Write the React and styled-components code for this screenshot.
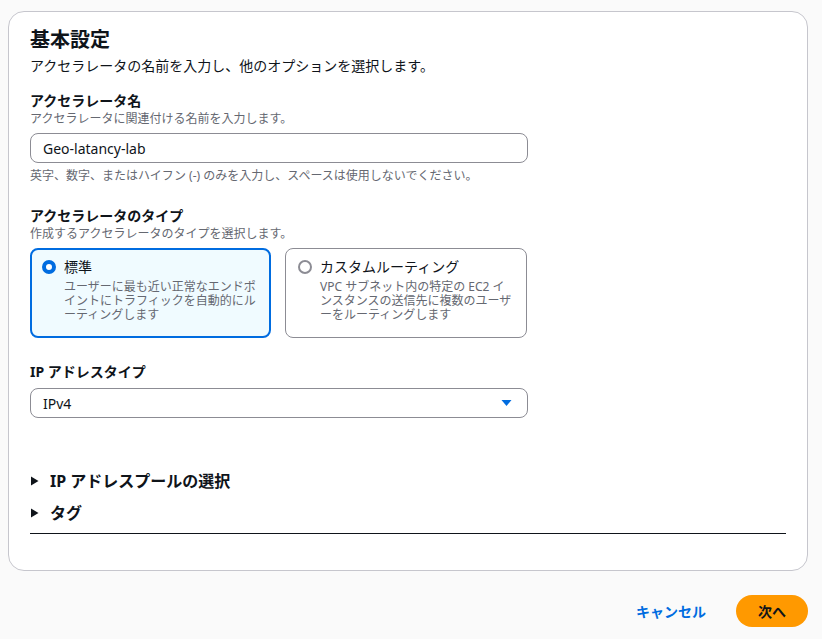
import React from "react";
import styled, { createGlobalStyle } from "styled-components";

const Global = createGlobalStyle`
  html, body { margin: 0; padding: 0; background: #fafafa; }
  body { font-family: "Noto Sans", "Noto Sans CJK JP", sans-serif; color: #0f141a; }
  * { box-sizing: border-box; }
`;

const Page = styled.div`
  padding: 11px 14px 0 8px;
  width: 822px;
`;

const Card = styled.section`
  width: 800px;
  background: #fff;
  border: 1px solid #c6c6cd;
  border-radius: 16px;
  padding: 16px 21px 36px 21px;
  display: flex;
  flex-direction: column;
`;

const Title = styled.h2`
  margin: 0;
  font-size: 20px;
  line-height: 24px;
  font-weight: 700;
`;

const Lead = styled.p`
  margin: 4px 0 0;
  font-size: 14px;
  line-height: 20px;
  color: #0f141a;
`;

const Field = styled.div`
  display: flex;
  flex-direction: column;
  width: 498px;
  margin-top: ${(p) => p.$top}px;
`;

const Label = styled.div`
  font-size: 14px;
  line-height: 20px;
  font-weight: 700;
`;

const Hint = styled.div`
  font-size: 12px;
  line-height: 16px;
  color: #656871;
  margin-top: ${(p) => p.$top || 0}px;
`;

const Input = styled.div`
  height: 30px;
  margin-top: 6px;
  border: 1px solid #8c8c94;
  border-radius: 8px;
  padding: 0 12px;
  display: flex;
  align-items: center;
  font-size: 14px;
  color: #0f141a;
`;

const Select = styled(Input)`
  justify-content: space-between;
  padding-right: 15px;
`;

const Tiles = styled.div`
  display: grid;
  grid-template-columns: 241px 242px;
  gap: 14px;
  margin-top: 6px;
`;

const Tile = styled.div`
  height: 90px;
  border-radius: 8px;
  border: ${(p) => (p.$on ? "2px solid #006ce0" : "1px solid #8c8c94")};
  background: ${(p) => (p.$on ? "#f0fbff" : "#fff")};
  padding: ${(p) => (p.$on ? "7px 11px 0 10px" : "8px 12px 0 12px")};
  display: flex;
  gap: 8px;
`;

const Radio = styled.span`
  flex: 0 0 14px;
  width: 14px;
  height: 14px;
  margin-top: 3px;
  border-radius: 50%;
  border: ${(p) => (p.$on ? "4px solid #006ce0" : "2px solid #8c8c94")};
  background: #fff;
`;

const TileBody = styled.div`
  display: flex;
  flex-direction: column;
  min-width: 0;
`;

const TileTitle = styled.div`
  font-size: 14px;
  line-height: 20px;
`;

const TileDesc = styled.div`
  font-size: 12px;
  line-height: 14px;
  color: #656871;
  margin-top: 3px;
  line-break: anywhere;
  word-break: break-all;
`;

const Expanders = styled.div`
  display: flex;
  flex-direction: column;
  gap: 10px;
  margin-top: 52px;
  padding-bottom: 9px;
  border-bottom: 1px solid #0f141a;
`;

const Expander = styled.div`
  display: flex;
  align-items: center;
  gap: 11px;
  font-size: 16px;
  line-height: 22px;
  font-weight: 700;
`;

const Footer = styled.div`
  display: flex;
  justify-content: flex-end;
  align-items: center;
  gap: 30px;
  margin-top: 24px;
`;

const LinkButton = styled.button`
  border: 0;
  background: none;
  font-family: inherit;
  font-size: 14px;
  font-weight: 700;
  color: #006ce0;
  padding: 0;
`;

const Primary = styled.button`
  border: 0;
  font-family: inherit;
  font-size: 14px;
  font-weight: 700;
  color: #0f141a;
  background: #ff9900;
  border-radius: 16px;
  height: 32px;
  width: 72px;
`;

const Caret = () => (
  <svg width="11" height="8" viewBox="0 0 11 8">
    <path d="M0.5 1 L10.5 1 L5.5 7 Z" fill="#006ce0" />
  </svg>
);

const Arrow = () => (
  <svg width="9" height="10" viewBox="0 0 9 10">
    <path d="M1 0.5 L8.5 5 L1 9.5 Z" fill="#0f141a" />
  </svg>
);

export default function App() {
  return (
    <>
      <Global />
      <Page>
        <Card>
          <Title>基本設定</Title>
          <Lead>アクセラレータの名前を入力し、他のオプションを選択します。</Lead>

          <Field $top={15}>
            <Label>アクセラレータ名</Label>
            <Hint>アクセラレータに関連付ける名前を入力します。</Hint>
            <Input>Geo-latancy-lab</Input>
            <Hint $top={5}>英字、数字、またはハイフン (-) のみを入力し、スペースは使用しないでください。</Hint>
          </Field>

          <Field $top={22}>
            <Label>アクセラレータのタイプ</Label>
            <Hint>作成するアクセラレータのタイプを選択します。</Hint>
            <Tiles>
              <Tile $on>
                <Radio $on />
                <TileBody>
                  <TileTitle>標準</TileTitle>
                  <TileDesc>ユーザーに最も近い正常なエンドポイントにトラフィックを自動的にルーティングします</TileDesc>
                </TileBody>
              </Tile>
              <Tile>
                <Radio />
                <TileBody>
                  <TileTitle>カスタムルーティング</TileTitle>
                  <TileDesc>VPC サブネット内の特定の EC2 インスタンスの送信先に複数のユーザーをルーティングします</TileDesc>
                </TileBody>
              </Tile>
            </Tiles>
          </Field>

          <Field $top={24}>
            <Label>IP アドレスタイプ</Label>
            <Select>
              <span>IPv4</span>
              <Caret />
            </Select>
          </Field>

          <Expanders>
            <Expander><Arrow />IP アドレスプールの選択</Expander>
            <Expander><Arrow />タグ</Expander>
          </Expanders>
        </Card>
        <Footer>
          <LinkButton>キャンセル</LinkButton>
          <Primary>次へ</Primary>
        </Footer>
      </Page>
    </>
  );
}
